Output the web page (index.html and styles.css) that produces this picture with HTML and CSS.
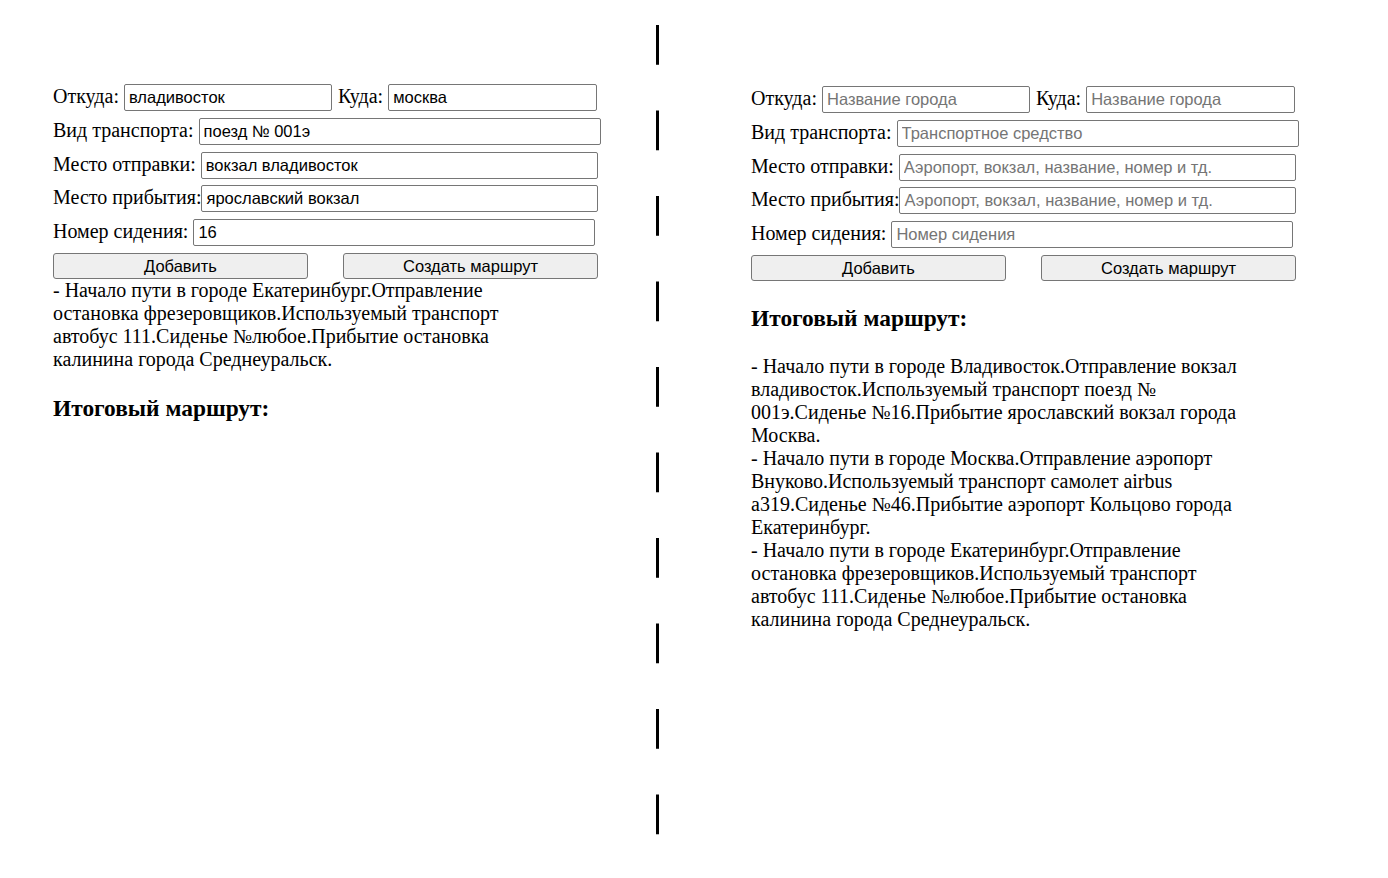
FILE: index.html
```html
<!DOCTYPE html>
<html lang="ru">
<head>
<meta charset="utf-8">
<title>Маршрут</title>
<link rel="stylesheet" href="styles.css">
</head>
<body>
<div class="page">
  <section class="panel panel-left">
    <form class="route-form">
      <div class="row">
        <label class="lbl">Откуда:</label>
        <input class="field w-city" type="text" value="владивосток">
        <label class="lbl lbl-next">Куда:</label>
        <input class="field w-city2" type="text" value="москва">
      </div>
      <div class="row">
        <label class="lbl">Вид транспорта:</label>
        <input class="field w-transport" type="text" value="поезд № 001э">
      </div>
      <div class="row">
        <label class="lbl">Место отправки:</label>
        <input class="field w-place" type="text" value="вокзал владивосток">
      </div>
      <div class="row">
        <label class="lbl lbl-tight">Место прибытия:</label>
        <input class="field w-place" type="text" value="ярославский вокзал">
      </div>
      <div class="row">
        <label class="lbl">Номер сидения:</label>
        <input class="field w-seat" type="text" value="16">
      </div>
      <div class="buttons">
        <button type="button" class="btn">Добавить</button>
        <button type="button" class="btn">Создать маршрут</button>
      </div>
    </form>
    <div class="route-list">
      <div class="route-item">- Начало пути в городе Екатеринбург.Отправление остановка фрезеровщиков.Используемый транспорт автобус 111.Сиденье №любое.Прибытие остановка калинина города Среднеуральск.</div>
    </div>
    <h3 class="title">Итоговый маршрут:</h3>
  </section>

  <div class="divider"></div>

  <section class="panel panel-right">
    <form class="route-form">
      <div class="row">
        <label class="lbl">Откуда:</label>
        <input class="field w-city" type="text" placeholder="Название города">
        <label class="lbl lbl-next">Куда:</label>
        <input class="field w-city2" type="text" placeholder="Название города">
      </div>
      <div class="row">
        <label class="lbl">Вид транспорта:</label>
        <input class="field w-transport" type="text" placeholder="Транспортное средство">
      </div>
      <div class="row">
        <label class="lbl">Место отправки:</label>
        <input class="field w-place" type="text" placeholder="Аэропорт, вокзал, название, номер и тд.">
      </div>
      <div class="row">
        <label class="lbl lbl-tight">Место прибытия:</label>
        <input class="field w-place" type="text" placeholder="Аэропорт, вокзал, название, номер и тд.">
      </div>
      <div class="row">
        <label class="lbl">Номер сидения:</label>
        <input class="field w-seat" type="text" placeholder="Номер сидения">
      </div>
      <div class="buttons">
        <button type="button" class="btn">Добавить</button>
        <button type="button" class="btn">Создать маршрут</button>
      </div>
    </form>
    <h3 class="title">Итоговый маршрут:</h3>
    <div class="route-list">
      <div class="route-item">- Начало пути в городе Владивосток.Отправление вокзал владивосток.Используемый транспорт поезд № 001э.Сиденье №16.Прибытие ярославский вокзал города Москва.</div>
      <div class="route-item">- Начало пути в городе Москва.Отправление аэропорт Внуково.Используемый транспорт самолет airbus a319.Сиденье №46.Прибытие аэропорт Кольцово города Екатеринбург.</div>
      <div class="route-item">- Начало пути в городе Екатеринбург.Отправление остановка фрезеровщиков.Используемый транспорт автобус 111.Сиденье №любое.Прибытие остановка калинина города Среднеуральск.</div>
    </div>
  </section>
</div>
</body>
</html>
```

FILE: styles.css
```css
html, body {
  margin: 0;
  padding: 0;
  background: #ffffff;
}

body {
  font-family: "Liberation Serif", "Times New Roman", serif;
  font-size: 20px;
  line-height: 23px;
  color: #000000;
}

.page {
  display: flex;
  min-height: 878px;
}

.panel {
  box-sizing: border-box;
}

.panel-left {
  width: 656px;
  padding: 84px 0 0 53px;
}

.panel-right {
  flex: 1;
  padding: 86px 0 0 92px;
}

.divider {
  width: 3px;
  flex: none;
  background-image: repeating-linear-gradient(to bottom, #000000 0, #000000 40px, transparent 40px, transparent 85.5px);
  background-position: 0 25px;
  background-repeat: repeat-y;
  background-size: 3px 85.5px;
  background-origin: border-box;
  margin-top: 0;
}

.route-form {
  display: flex;
  flex-direction: column;
  gap: 6.75px;
  width: 548px;
  margin: 0;
}

.row {
  display: flex;
  align-items: baseline;
  height: 27px;
}

.lbl {
  white-space: nowrap;
  margin-right: 5px;
}

.lbl-next {
  margin-left: 6px;
}

.lbl-tight {
  margin-right: 0;
}

.field {
  box-sizing: border-box;
  height: 27px;
  padding: 1px 4px;
  border: 1px solid #767676;
  border-radius: 2px;
  font-family: "Liberation Sans", Arial, sans-serif;
  font-size: 16.5px;
  color: #000000;
  background: #ffffff;
  outline: none;
}

.field::placeholder {
  color: #757575;
}

.w-city {
  width: 208px;
}

.w-city2 {
  width: 209px;
}

.w-transport {
  width: 402px;
}

.w-place {
  width: 397px;
}

.w-seat {
  width: 402px;
}

.buttons {
  display: flex;
  justify-content: space-between;
  width: 545px;
}

.btn {
  box-sizing: border-box;
  width: 255px;
  height: 26.5px;
  padding: 0;
  border: 1px solid #767676;
  border-radius: 3px;
  background: #efefef;
  font-family: "Liberation Sans", Arial, sans-serif;
  font-size: 16.5px;
  color: #000000;
}

.route-list {
  width: 500px;
}

.title {
  margin: 23.4px 0;
  font-size: 23.4px;
  line-height: 27px;
  font-weight: bold;
}
```
